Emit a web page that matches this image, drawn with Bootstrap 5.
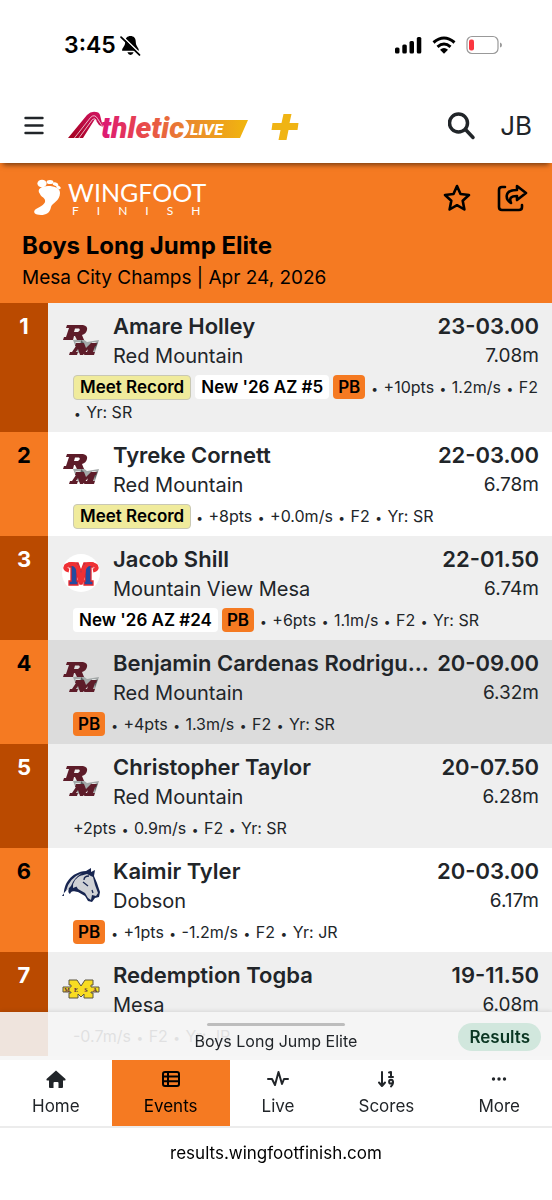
<!DOCTYPE html>
<html lang="en">
<head>
<meta charset="utf-8">
<meta name="viewport" content="width=device-width, initial-scale=1">
<title>Boys Long Jump Elite - Wingfoot Finish</title>
<link href="https://cdn.jsdelivr.net/npm/bootstrap@5.3.0/dist/css/bootstrap.min.css" rel="stylesheet">
<style>
  :root { --brand: #f57a22; --brand-dark: #ba4a00; }
  body { font-family: Inter, "Liberation Sans", sans-serif; font-size: 20px; line-height: 30px; color: #212529; background: #fff; }
  svg { display: block; flex: none; }
  .status { height: 88px; padding: 2px 49px 0 64px; color: #000; }
  .status-icons { gap: 10px; }
  .clock { font-size: 23px; font-weight: 600; }
  .topbar { height: 75px; padding: 0 20px 0 24px; box-shadow: 0 5px 5px -3px rgba(0,0,0,.5); z-index: 2; }
  .initials { font-size: 26px; color: #212529; }
  .hero { background: var(--brand); color: #000; padding: 13px 20px 9px 22px; }
  .wordmark { font-family: Lato, sans-serif; font-weight: 400; font-size: 25px; line-height: 26px; }
  .submark { font-family: Lato, sans-serif; font-size: 12px; line-height: 12px; letter-spacing: 18px; padding-left: 4px; }
  .event-title { font-size: 24px; line-height: 32px; font-weight: 700; margin-top: 10px; }
  .meet { font-size: 19px; line-height: 32px; }
  .results li { background: #fff; }
  .results li:nth-child(odd) { background: #efefef; }
  .results li.picked { background: #dcdcdc; }
  .place { width: 48px; padding-top: 8px; background: var(--brand); color: #000; font-size: 22px; font-weight: 700; text-align: center; flex: none; }
  li:nth-child(odd) > .place { background: var(--brand-dark); color: #fff; }
  .entry { padding: 8px 13px 7px 14px; }
  .crest { width: 51px; height: 58px; flex: none; }
  .athlete, .best { font-size: 22px; font-weight: 600; }
  .metric { font-size: 19px; }
  .details { font-size: 16px; line-height: 25px; padding: 4px 0 0 11px; margin-right: -3px; }
  .details span { white-space: nowrap; }
  .details i { font-style: normal; font-size: 12px; line-height: 1; padding: 0 1px; }
  .details .tag { display: inline-block; height: 24px; line-height: 24px; border-radius: 4px; padding: 0 6px; margin-right: 4px; font-size: 17px; font-weight: 600; color: #000; background: #fff; vertical-align: top; }
  .details .tag-record { background: #f0eb9c; border: 1px solid #c9c8b4; line-height: 23px; height: 25px; }
  .details .tag-pb { background: var(--brand); padding: 0 5px; margin-right: 5px; }
  .drawer { height: 48px; background: rgba(245,245,245,.9); box-shadow: 0 -1px 4px rgba(0,0,0,.1); padding: 0 12px; }
  .grip { width: 138px; height: 3px; background: #bdbdbd; border-radius: 2px; margin: 11px auto 0; }
  .drawer-title { font-size: 16px; line-height: 20px; margin-top: 5px; }
  .pill { position: absolute; right: 11px; top: 11px; height: 28px; line-height: 28px; padding: 0 11px; border-radius: 14px; background: #d1e7dd; color: #0a3622; font-size: 17px; font-weight: 600; border: 0; }
  .tabs { background: #fff; border-bottom: 2px solid #ececec; }
  .tabs .nav-link { color: #212529; font-size: 17px; line-height: 26px; padding: 9px 4px 7px; height: 66px; }
  .tabs .nav-link.active { background: var(--brand); color: #000; }
  .tabs svg { margin: 0 auto 3px; }
  .address { height: 72px; padding-top: 10px; font-size: 17px; line-height: 30px; background: #fff; color: #000; }
</style>
</head>
<body>
<svg width="0" height="0" class="position-absolute" aria-hidden="true">
  <symbol id="rm" viewBox="0 0 38 30">
    <path d="M11 15l10-1 4 3 12-2-4 12-8-2-9 3z" fill="#a3a8a8"/>
    <path d="M13 17h5l-1 4zM30 17l4 0-3 5z" fill="#dfe1e1"/>
    <path d="M19 15l3 3-3 2zM36 17l-3 8-1-4z" fill="#596061"/>
    <path fill-rule="evenodd" d="M5 0h16q5 1 4 5-1 4-5 5l2 5h-7l-2-4h-1l-1 4H1l1-3h2l3-9H4zM13 3.500l-1 3.500h4q3-2 1-3.500z" fill="#5d1c29"/>
    <path d="M14 18h8l2 5 5-5h6l-1 3h-1l-2 6h2l-1 3h-10l1-3h2l1-3-5 6h-3l-2-6-2 3h2l-1 3H7l1-3h2l4-6h-1z" fill="#5d1c29"/>
  </symbol>
</svg>

<div class="status d-flex align-items-center">
  <span class="clock">3:45</span>
  <svg class="ms-1" width="21" height="21" viewBox="0 0 20 20" aria-label="Silent mode"><path d="M10 1c-3 0-5 2-5 5.500C5 11 2 12 2 15h16c0-3-3-4-3-8.500C15 3 13 1 10 1zM7 16.500h6q-1 2.500-3 2.500t-3-2.500z"/><path d="M2 1l17.500 17" stroke="#fff" stroke-width="1.500"/><path d="M1 2l17.500 17" stroke="#000" stroke-width="1.700" stroke-linecap="round"/></svg>
  <div class="status-icons ms-auto d-flex align-items-center">
    <svg width="27" height="18" viewBox="0 0 27 18" aria-label="Signal"><rect x="0" y="11.500" width="4.500" height="6" rx="1.500"/><rect x="7.300" y="8.500" width="4.500" height="9" rx="1.500"/><rect x="14.500" y="5" width="4.500" height="12.500" rx="1.500"/><rect x="21.800" y="1" width="4.500" height="16.500" rx="1.500"/></svg>
    <svg width="24" height="18" viewBox="0 0 24 18" fill="none" stroke="#000" stroke-width="3" aria-label="Wi-Fi"><path d="M1.500 6.500q10.500-9 21 0M5.500 10.800q6.500-5.600 13 0"/><path d="M8 13.700q4-3.500 8 0l-4 4z" fill="#000" stroke="none"/></svg>
    <svg width="37" height="20" viewBox="0 0 37 20" aria-label="Battery low"><rect x="1" y="1.500" width="31" height="17" rx="5" fill="none" stroke="#999" stroke-width="1.200"/><rect x="3" y="4.500" width="5" height="11" rx="2" fill="#fb3640"/><path d="M34 7.500q2 .5 2 2.500t-2 2.500z" fill="#999"/></svg>
  </div>
</div>

<header class="topbar position-relative d-flex align-items-center bg-white">
  <button class="btn p-0 border-0" aria-label="Menu"><svg width="20" height="20" viewBox="0 0 20 20" stroke="#212529" stroke-width="2.400" stroke-linecap="round"><path d="M1.500 2h17M1.500 9.500h17M1.500 17h17"/></svg></button>
  <a href="#" class="ms-4" aria-label="Athletic Live"><svg width="234" height="34" viewBox="-1 0 234 34">
    <defs><linearGradient id="sun" gradientUnits="userSpaceOnUse" x1="32" y1="0" x2="180" y2="0"><stop offset="0" stop-color="#dc1675"/><stop offset=".28" stop-color="#e8484c"/><stop offset=".6" stop-color="#ea8a2c"/><stop offset="1" stop-color="#f1b70d"/></linearGradient>
    <linearGradient id="track" x1="0" y1="1" x2="1" y2="0"><stop offset="0" stop-color="#a3001d"/><stop offset="1" stop-color="#d31463"/></linearGradient></defs>
    <path d="M-1 29L18 6q4-4 9-3 3 0 4 3l3 12-4-2-4-6L14 29z" fill="url(#track)"/>
    <path d="M5 29.500L21.500 8.500q4-4 7 1l5 8M9.500 29.500L23.500 10.500q2-2 4 1" fill="none" stroke="#fff" stroke-width=".7"/>
    <path d="M116 11h63l-8 18h-57q5-4 6-9t-4-9z" fill="url(#sun)"/>
    <text x="32" y="29" font-family="Roboto" font-weight="900" font-style="italic" font-size="30" fill="url(#sun)">thletic</text>
    <text x="121" y="26" font-family="Inter" font-weight="800" font-style="italic" font-size="15" fill="#fff">LIVE</text>
    <path d="M214.500 5h8l-2 9h9l-1 7h-9l-2 10h-8l2-10h-9l1-7h9z" fill="#f0b414"/>
  </svg></a>
  <button class="btn p-0 border-0 ms-auto" aria-label="Search"><svg width="28" height="30" viewBox="0 0 28 30" fill="none" stroke="#212529" stroke-width="3.500" stroke-linecap="round"><circle cx="10.500" cy="12" r="9"/><path d="M17.500 18.500l7.500 8"/></svg></button>
  <button class="btn p-0 border-0 initials ms-4">JB</button>
</header>

<section class="hero">
  <div class="d-flex align-items-center">
    <svg class="ms-2" width="38" height="44" viewBox="-1 0 38 44" fill="#fff" aria-hidden="true"><path d="M9 18C5 13 11 10 17 10c7 0 12 2 12 7 0 8-8 10-9 14-1 6-5 8-10 8-6 0-9-3-5-6 5-3 10-5 9-9-1-3-4-3-5-6z"/><ellipse cx="11" cy="7.500" rx="4.600" ry="3.800"/><ellipse cx="19" cy="6" rx="3.400" ry="2"/><ellipse cx="24.500" cy="8" rx="3" ry="1.700" transform="rotate(20 24 8)"/><ellipse cx="27.500" cy="11" rx="2.500" ry="1.500" transform="rotate(30 27 11)"/></svg>
    <div class="text-white">
      <div class="wordmark">WINGFOOT</div>
      <div class="submark">FINISH</div>
    </div>
    <button class="btn p-0 border-0 ms-auto" aria-label="Favorite"><svg width="30" height="30" viewBox="0 0 30 30" fill="none" stroke="#000" stroke-width="2.600" stroke-linejoin="round"><path d="M15 3l3.500 8 8.500 1-6.300 5.800 1.700 8.700-7.400-4.300-7.400 4.300 1.700-8.700L3 12l8.500-1z"/></svg></button>
    <button class="btn p-0 border-0 ms-4 me-1" aria-label="Share"><svg width="32" height="30" viewBox="0 0 32 30" fill="none" stroke="#000" stroke-width="2.600" stroke-linejoin="round" stroke-linecap="round"><path d="M9 4H6q-3 0-3 3v17q0 3 3 3h17q3 0 3-3v-2"/><path d="M21 3l9 7-9 7v-4c-6 0-8 2-6 7-6-4-7-13 6-13z"/></svg></button>
  </div>
  <h1 class="event-title mb-0">Boys Long Jump Elite</h1>
  <div class="meet">Mesa City Champs | Apr 24, 2026</div>
</section>

<ol class="results list-unstyled mb-0">
  <li class="d-flex"><div class="place">1</div><div class="entry flex-grow-1 overflow-hidden">
    <div class="d-flex"><div class="crest d-flex align-items-center"><svg width="38" height="30"><use href="#rm"/></svg></div><div class="flex-grow-1 overflow-hidden"><div class="athlete text-truncate">Amare Holley</div><div>Red Mountain</div></div><div class="text-end text-nowrap ms-2"><div class="best">23-03.00</div><div class="metric">7.08m</div></div></div>
    <div class="details"><span class="tag tag-record">Meet Record</span><span class="tag">New '26 AZ #5</span><span class="tag tag-pb">PB</span><span><i>•</i> +10pts</span> <span><i>•</i> 1.2m/s</span> <span><i>•</i> F2</span> <span><i>•</i> Yr: SR</span></div>
  </div></li>
  <li class="d-flex"><div class="place">2</div><div class="entry flex-grow-1 overflow-hidden">
    <div class="d-flex"><div class="crest d-flex align-items-center"><svg width="38" height="30"><use href="#rm"/></svg></div><div class="flex-grow-1 overflow-hidden"><div class="athlete text-truncate">Tyreke Cornett</div><div>Red Mountain</div></div><div class="text-end text-nowrap ms-2"><div class="best">22-03.00</div><div class="metric">6.78m</div></div></div>
    <div class="details"><span class="tag tag-record">Meet Record</span><span><i>•</i> +8pts</span> <span><i>•</i> +0.0m/s</span> <span><i>•</i> F2</span> <span><i>•</i> Yr: SR</span></div>
  </div></li>
  <li class="d-flex"><div class="place">3</div><div class="entry flex-grow-1 overflow-hidden">
    <div class="d-flex"><div class="crest d-flex align-items-center"><svg width="38" height="38" viewBox="0 0 38 38"><circle cx="19" cy="19" r="19" fill="#fff"/>
      <path d="M7 9h9l3 8 3-8h9v4h-2v14h2v4h-9v-4h1V17l-3 13h-2L15 17v10h1v4H7v-4h2V13H7z" fill="#234ba0" stroke="#e8262b" stroke-width="1.300"/><path d="M7 16.500q-5-1-3-4.500 2-2 6-2 4 0 6 5l3 14 3-14q2-5 6-5 4 0 6 2 2 3.500-3 4.500" fill="none" stroke="#ef3034" stroke-width="4.200" stroke-linejoin="bevel"/></svg></div><div class="flex-grow-1 overflow-hidden"><div class="athlete text-truncate">Jacob Shill</div><div>Mountain View Mesa</div></div><div class="text-end text-nowrap ms-2"><div class="best">22-01.50</div><div class="metric">6.74m</div></div></div>
    <div class="details"><span class="tag">New '26 AZ #24</span><span class="tag tag-pb">PB</span><span><i>•</i> +6pts</span> <span><i>•</i> 1.1m/s</span> <span><i>•</i> F2</span> <span><i>•</i> Yr: SR</span></div>
  </div></li>
  <li class="d-flex picked"><div class="place">4</div><div class="entry flex-grow-1 overflow-hidden">
    <div class="d-flex"><div class="crest d-flex align-items-center"><svg width="38" height="30"><use href="#rm"/></svg></div><div class="flex-grow-1 overflow-hidden"><div class="athlete text-truncate">Benjamin Cardenas Rodriguez</div><div>Red Mountain</div></div><div class="text-end text-nowrap ms-2"><div class="best">20-09.00</div><div class="metric">6.32m</div></div></div>
    <div class="details"><span class="tag tag-pb">PB</span><span><i>•</i> +4pts</span> <span><i>•</i> 1.3m/s</span> <span><i>•</i> F2</span> <span><i>•</i> Yr: SR</span></div>
  </div></li>
  <li class="d-flex"><div class="place">5</div><div class="entry flex-grow-1 overflow-hidden">
    <div class="d-flex"><div class="crest d-flex align-items-center"><svg width="38" height="30"><use href="#rm"/></svg></div><div class="flex-grow-1 overflow-hidden"><div class="athlete text-truncate">Christopher Taylor</div><div>Red Mountain</div></div><div class="text-end text-nowrap ms-2"><div class="best">20-07.50</div><div class="metric">6.28m</div></div></div>
    <div class="details"><span>+2pts</span> <span><i>•</i> 0.9m/s</span> <span><i>•</i> F2</span> <span><i>•</i> Yr: SR</span></div>
  </div></li>
  <li class="d-flex"><div class="place">6</div><div class="entry flex-grow-1 overflow-hidden">
    <div class="d-flex"><div class="crest d-flex align-items-center"><svg width="38" height="38" viewBox="0 0 38 38"><path d="M2 30C1 18 9 6 24 5l5-3 0 4 4-2-1 6 3 7 3 9-1 5-4 1-3 4-4-1-3-5-7-4c-7-2-7 0-8 2-2-1-2-3-1-6-3 2-5 5-7 8z" fill="#172550"/><path d="M25 8l6 3 2 8 3 8-2 3-4-1-1 5-3-2-3-5-7-4q-3-4-2-8 1-5 11-7z" fill="#cfd1d5"/><path d="M4 25Q7 12 20 7 12 12 9 20M11 22q-1-9 9-13-4 4-4 11z" fill="#cfd1d5"/><path d="M21 16l5 4M30 24l1 3M27 10q-5 0-5 4" fill="none" stroke="#172550" stroke-width="1.300"/></svg></div><div class="flex-grow-1 overflow-hidden"><div class="athlete text-truncate">Kaimir Tyler</div><div>Dobson</div></div><div class="text-end text-nowrap ms-2"><div class="best">20-03.00</div><div class="metric">6.17m</div></div></div>
    <div class="details"><span class="tag tag-pb">PB</span><span><i>•</i> +1pts</span> <span><i>•</i> -1.2m/s</span> <span><i>•</i> F2</span> <span><i>•</i> Yr: JR</span></div>
  </div></li>
  <li class="d-flex"><div class="place">7</div><div class="entry flex-grow-1 overflow-hidden">
    <div class="d-flex"><div class="crest d-flex align-items-center"><svg width="38" height="38" viewBox="0 0 38 38"><path d="M7 10h8l4 6 4-6h8v5h-2v2h8v5h-8v1h2v5h-9v-4l-3 3-3-3v4H7v-5h2v-1H1v-5h8v-2H7z" fill="#f8dc22" stroke="#5b5440" stroke-width="1"/><text y="22" text-anchor="middle" font-family="Liberation Serif" font-weight="700" font-size="6" fill="#54264a"><tspan x="5">M</tspan><tspan x="14">E</tspan><tspan x="24">S</tspan><tspan x="33">A</tspan></text></svg></div><div class="flex-grow-1 overflow-hidden"><div class="athlete text-truncate">Redemption Togba</div><div>Mesa</div></div><div class="text-end text-nowrap ms-2"><div class="best">19-11.50</div><div class="metric">6.08m</div></div></div>
    <div class="details"><span>-0.7m/s</span> <span><i>•</i> F2</span> <span><i>•</i> Yr: JR</span></div>
  </div></li>
</ol>

<footer class="fixed-bottom">
  <div class="drawer position-relative text-center">
    <div class="d-flex"><div class="grip"></div></div>
    <div class="drawer-title">Boys Long Jump Elite</div>
    <button class="pill">Results</button>
  </div>
  <nav class="tabs nav nav-fill flex-nowrap position-relative">
    <a class="nav-link nav-item" href="#"><svg width="22" height="21" viewBox="0 0 22 21"><path d="M11 1.500l9.500 8.500q.5 1.500-1 1.500H18V18q0 1-1 1h-3.500v-5q0-1-1-1h-3q-1 0-1 1v5H5q-1 0-1-1v-6.500H2.500Q1 11.500 1.500 10z" fill="#212529"/></svg>Home</a>
    <a class="nav-link nav-item active" aria-current="page" href="#"><svg width="20" height="21" viewBox="0 0 20 21" fill="none" stroke="#000" stroke-width="2"><rect x="2" y="3" width="16" height="14" rx="2"/><path d="M2 7.500h16M2 12.300h16M7 3v14"/></svg>Events</a>
    <a class="nav-link nav-item" href="#"><svg width="24" height="21" viewBox="0 0 24 21" fill="none" stroke="#212529" stroke-width="2" stroke-linejoin="round" stroke-linecap="round"><path d="M2 10h4l3 6 3.500-13L16 15l2-5h4"/></svg>Live</a>
    <a class="nav-link nav-item" href="#"><svg width="20" height="21" viewBox="0 0 20 21" fill="none" stroke="#212529" stroke-width="2" stroke-linecap="round" stroke-linejoin="round"><path d="M6 3v14M3 13.500L6 17l3-3.500M13 3.500l2-.5v5M13 8h4"/><circle cx="15" cy="12.700" r="1.900"/><path d="M17 13q0 3-2 4.500"/></svg>Scores</a>
    <a class="nav-link nav-item" href="#"><svg width="20" height="21" viewBox="0 0 20 21" fill="#212529"><circle cx="4.500" cy="10" r="1.700"/><circle cx="10" cy="10" r="1.700"/><circle cx="15.500" cy="10" r="1.700"/></svg>More</a>
  </nav>
  <div class="address text-center">results.wingfootfinish.com</div>
</footer>
<script src="https://cdn.jsdelivr.net/npm/bootstrap@5.3.0/dist/js/bootstrap.bundle.min.js"></script>
</body>
</html>
